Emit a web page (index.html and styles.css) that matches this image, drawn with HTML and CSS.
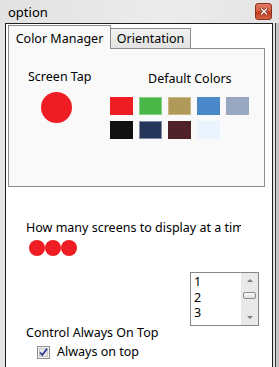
FILE: index.html
```html
<!DOCTYPE html>
<html lang="en">
<head>
    <meta charset="UTF-8">
    <title>option</title>
    <link rel="stylesheet" href="styles.css">
</head>
<body>

<div class="window">
    <div class="titlebar">
        <span class="title">option</span>
        <div class="close" role="button" aria-label="Close">
            <svg width="8" height="7" viewBox="0 0 8 7">
                <path d="M1.5 1 L6.5 6 M6.5 1 L1.5 6" stroke="#7a2a18" stroke-width="2.6" stroke-linecap="square"/>
                <path d="M1.5 1 L6.5 6 M6.5 1 L1.5 6" stroke="#fff" stroke-width="1.3" stroke-linecap="square"/>
            </svg>
        </div>
    </div>

    <div class="frame">
        <div class="client">
            <div class="tabs">
                <div class="tab active">Color Manager</div>
                <div class="tab">Orientation</div>
            </div>

            <div class="panel">
                <div class="tap">
                    <div class="tap-label">Screen Tap</div>
                    <div class="tap-dot"></div>
                </div>
                <div class="defaults">
                    <div class="defaults-title">Default Colors</div>
                    <div class="swatches">
                        <span class="swatch red"></span>
                        <span class="swatch green"></span>
                        <span class="swatch khaki"></span>
                        <span class="swatch blue"></span>
                        <span class="swatch steel"></span>
                        <span class="swatch black"></span>
                        <span class="swatch navy"></span>
                        <span class="swatch maroon"></span>
                        <span class="swatch ice"></span>
                    </div>
                </div>
            </div>

            <div class="screens">
                <div class="screens-label">How many screens to display at a time</div>
                <div class="dots">
                    <span class="dot"></span>
                    <span class="dot"></span>
                    <span class="dot"></span>
                </div>

                <div class="listbox">
                    <ul class="items">
                        <li>1</li>
                        <li>2</li>
                        <li>3</li>
                    </ul>
                    <div class="scrollbar">
                        <span class="arrow up"></span>
                        <span class="thumb"></span>
                        <span class="arrow down"></span>
                    </div>
                </div>

                <div class="ontop-label">Control Always On Top</div>
                <label class="check-row">
                    <svg class="checkbox" width="13" height="13" viewBox="0 0 13 13">
                        <rect x="0.5" y="0.5" width="12" height="12" fill="#f4f4f4" stroke="#8e8f8f"/>
                        <rect x="2.5" y="2.5" width="8" height="8" fill="#e6e6e6" stroke="#c9c9c9"/>
                        <path d="M3 6.5 L5.3 9 L10 2.8" fill="none" stroke="#26348f" stroke-width="1.7"/>
                    </svg>
                    <span>Always on top</span>
                </label>
            </div>
        </div>
    </div>
</div>

</body>
</html>
```

FILE: styles.css
```css
body {
    margin: 0;
    width: 279px;
    height: 367px;
    overflow: hidden;
    font-family: "Noto Sans", "Liberation Sans", sans-serif;
    font-size: 12.5px;
    color: #000;
    background: linear-gradient(to right, #e2e2e2, #ececec 60%, #e4e4e4);
}
.window {
    display: flex;
    flex-direction: column;
    height: 100%;
}
.titlebar {
    height: 23px;
    display: flex;
    align-items: center;
    justify-content: space-between;
    padding: 0 7px 0 8px;
}
.title {
    font-size: 13px;
}
.close {
    box-sizing: border-box;
    flex: none;
    width: 17px;
    height: 17px;
    border: 1px solid #8a3220;
    border-radius: 3px;
    background-color: #d0553a;
    background-image: linear-gradient(#e07a62, #d65f44 45%, #c23b20 55%, #d5603f);
    display: flex;
    align-items: center;
    justify-content: center;
}
.frame {
    flex: 1;
    display: flex;
    background: linear-gradient(to right, #e4e4e4 0, #e4e4e4 275px, #3c3c3c 275px, #3c3c3c 276px, #c4c4c4 276px);
}
.client {
    flex: 1;
    margin: 0 6px 0 5px;
    border: 1px solid #1e1e1e;
    border-bottom: none;
    background: #fff;
}
.tabs {
    display: flex;
    align-items: flex-end;
    margin-top: 1px;
    padding-left: 2px;
    position: relative;
    z-index: 1;
}
.tab {
    box-sizing: border-box;
    width: 80px;
    height: 20px;
    border: 1px solid #8c8e94;
    border-left: none;
    border-bottom: none;
    background: linear-gradient(#f2f2f2, #e3e3e3);
    text-align: center;
    line-height: 20px;
}
.tab.active {
    width: 103px;
    height: 24px;
    border-left: 1px solid #8c8e94;
    background: #f9f9f9;
    line-height: 25px;
    margin-bottom: -1px;
}
.panel {
    box-sizing: border-box;
    height: 139px;
    margin: 0 7px 0 2px;
    border: 1px solid #8c8e94;
    background: #f9f9f9;
    display: flex;
    align-items: flex-start;
    padding-top: 20px;
}
.tap {
    box-sizing: border-box;
    width: 101px;
    padding-left: 19px;
}
.tap-label {
    line-height: 16px;
}
.tap-dot {
    width: 31px;
    height: 31px;
    margin: 7px 0 0 13px;
    border-radius: 50%;
    background: #ee1d23;
}
.defaults-title {
    padding-left: 38px;
    margin-top: 2px;
    line-height: 16px;
}
.swatches {
    display: grid;
    grid-template-columns: repeat(5, 23px);
    grid-auto-rows: 18px;
    gap: 6px;
    margin-top: 10px;
}
.swatch {
    box-sizing: border-box;
    border: 1px solid transparent;
}
.red { background: #ee1d23; }
.green { background: #4bb749; border-color: #86d183; }
.khaki { background: #af9a59; border-color: #c9b985; }
.blue { background: #4a88ca; }
.steel { background: #98a8c1; }
.black { background: #111; }
.navy { background: #26365a; border-color: #7f8aa5; }
.maroon { background: #4f2128; }
.ice { background: #eaf4fe; }
.screens {
    padding-left: 20px;
}
.screens-label {
    width: 215px;
    margin-top: 33px;
    line-height: 16px;
    white-space: nowrap;
    overflow: hidden;
}
.dots {
    display: flex;
    margin: 4px 0 0 3px;
}
.dot {
    width: 16px;
    height: 16px;
    border-radius: 50%;
    background: #ee1d23;
}
.listbox {
    box-sizing: border-box;
    width: 69px;
    height: 54px;
    margin: 16px 0 0 164px;
    border: 1px solid #828790;
    background: #fff;
    display: flex;
}
.items {
    flex: 1;
    margin: 0;
    padding: 1px 0 0 3px;
    list-style: none;
}
.items li {
    line-height: 15.5px;
}
.scrollbar {
    width: 17px;
    background: #e9e9e9;
    display: flex;
    flex-direction: column;
    align-items: center;
    padding: 6px 0;
}
.arrow {
    width: 0;
    height: 0;
    border-left: 3px solid transparent;
    border-right: 3px solid transparent;
}
.arrow.up {
    border-bottom: 3px solid #7c7c7c;
}
.arrow.down {
    margin-top: auto;
    border-top: 3px solid #7c7c7c;
}
.thumb {
    box-sizing: border-box;
    width: 13px;
    height: 7px;
    margin-top: 10px;
    border: 1px solid #8b8b8b;
    border-radius: 2px;
    background: linear-gradient(#fafafa, #dcdcdc);
}
.ontop-label {
    line-height: 14px;
}
.check-row {
    display: flex;
    align-items: center;
    height: 14px;
    margin-top: 5px;
    padding-left: 11px;
}
.check-row span {
    margin-left: 7px;
    line-height: 14px;
}
```
